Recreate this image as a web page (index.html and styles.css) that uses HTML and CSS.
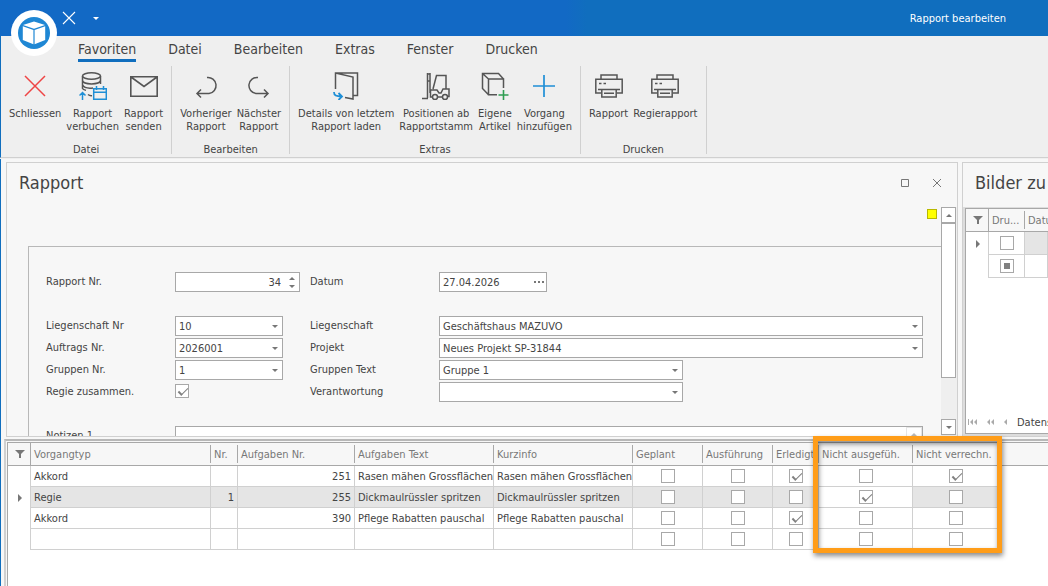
FILE: index.html
```html
<!DOCTYPE html>
<html lang="de">
<head>
<meta charset="utf-8">
<title>Rapport bearbeiten</title>
<link rel="stylesheet" href="styles.css">
</head>
<body>
<header class="titlebar">
  <div class="logo">
    <svg width="46" height="46" viewBox="0 0 46 46"><circle cx="23" cy="23" r="23" fill="#fff"/><circle cx="23" cy="23" r="16" fill="#1f87d4"/><path d="M23 11.5L34 15L23 18.7L12 15Z M11.8 16.3L22.4 20V34.2L11.8 30Z M34.2 16.3L23.6 20V34.2L34.2 30Z" fill="#fff"/></svg>
  </div>
  <button class="quick" aria-label="Schliessen"><svg width="14" height="14" viewBox="0 0 14 14"><path d="M1 1L13 13M13 1L1 13" stroke="#fff" stroke-width="1.1"/></svg></button>
  <button class="quick" aria-label="Mehr"><svg width="6" height="3" viewBox="0 0 6 3"><path d="M0 0H6L3 3Z" fill="#fff"/></svg></button>
  <h1 class="window-title">Rapport bearbeiten</h1>
</header>

<nav class="tabs">
  <button class="tab tab-active">Favoriten</button>
  <button class="tab">Datei</button>
  <button class="tab">Bearbeiten</button>
  <button class="tab">Extras</button>
  <button class="tab">Fenster</button>
  <button class="tab">Drucken</button>
</nav>

<div class="ribbon">
  <section class="group">
    <div class="tools">
      <button class="tool"><svg class="icon" viewBox="0 0 28 28"><path d="M4 4L24 24M24 4L4 24" stroke="#ef4444" stroke-width="1.5"/></svg><span>Schliessen</span></button>
      <button class="tool"><svg class="icon" viewBox="0 0 28 28"><g stroke="#555" stroke-width="1.5"><ellipse cx="12.5" cy="4" rx="9" ry="3.2"/><path d="M3.5 4V16.5C4 17.5 5.500 18 7 18.400M21.500 4V12M3.500 8.500C4.500 13 20.500 13 21.500 8.500M3.500 12.800C5 16 10 16.500 14 16M9 22.500C11 24 12 23.500 13 23.700"/></g><g stroke="#1f8fd6" stroke-width="1.5"><path d="M14.700 16.700H27.300V27.200H14.700ZM14.700 20.300H27.300M17.500 14V18M24.500 14V18M3.500 28V20.500M.5 23.500L3.500 20.500L6.500 23.500"/></g></svg><span>Rapport<br>verbuchen</span></button>
      <button class="tool"><svg class="icon" viewBox="0 0 28 28"><path d="M.8 4.800H27.200V24.200H.8ZM1 5L14 14.500L27 5" stroke="#555" stroke-width="1.600"/></svg><span>Rapport<br>senden</span></button>
    </div>
    <h2 class="group-name">Datei</h2>
  </section>
  <section class="group">
    <div class="tools">
      <button class="tool"><svg class="icon" viewBox="0 0 28 28"><path d="M15 5.500A8 8 0 0 1 17 21.500H5M9 17.500L5 21.500L9 25.500" stroke="#555" stroke-width="1.500"/></svg><span>Vorheriger<br>Rapport</span></button>
      <button class="tool"><svg class="icon" viewBox="0 0 28 28"><path d="M13 5.500A8 8 0 0 0 11 21.500H23M19 17.500L23 21.500L19 25.500" stroke="#555" stroke-width="1.500"/></svg><span>Nächster<br>Rapport</span></button>
    </div>
    <h2 class="group-name">Bearbeiten</h2>
  </section>
  <section class="group">
    <div class="tools">
      <button class="tool"><svg class="icon" viewBox="0 0 28 28"><path d="M3.500 17V1H25.500V23.500H21.500M3.500 1L21 5V27L13 25.500" stroke="#555" stroke-width="1.500"/><path d="M2 20C2 23.500 4 24.500 10 24.500M6.500 21L10 24.500L6.500 28" stroke="#1f8fd6" stroke-width="1.800"/></svg><span>Details von letztem<br>Rapport laden</span></button>
      <button class="tool"><svg class="icon" viewBox="0 0 28 28"><path d="M5.500 1V26M8 1V21M5.500 2H8M5.500 9H8M0 26.500H6M11 17L14.500 3.500H24V16M10 25H8.500V18H15L17 21H19L21 17H27V24.500H26M16 25H20M24 17V3.500" stroke="#555" stroke-width="1.500"/><circle cx="13" cy="25" r="2.500" stroke="#555" stroke-width="1.500"/><circle cx="23" cy="25" r="2.500" stroke="#555" stroke-width="1.500"/></svg><span>Positionen ab<br>Rapportstamm</span></button>
      <button class="tool"><svg class="icon" viewBox="0 0 28 28"><path d="M16 22.700H7.500V7H22.500V16M7.500 22.700L1.500 16.500V1.500H17.500L22.500 7M1.500 1.500L7.500 7" stroke="#555" stroke-width="1.500"/><path d="M17.500 23H27.500M22.500 18V28" stroke="#2e9d52" stroke-width="1.600"/></svg><span>Eigene<br>Artikel</span></button>
      <button class="tool"><svg class="icon" viewBox="0 0 28 28"><path d="M14 3V25M3 14H25" stroke="#1f8fd6" stroke-width="1.700"/></svg><span>Vorgang<br>hinzufügen</span></button>
    </div>
    <h2 class="group-name">Extras</h2>
  </section>
  <section class="group">
    <div class="tools">
      <button class="tool"><svg class="icon" viewBox="0 0 28 28"><path d="M6 7V3H22V7M6 21H.8V7.200H27.200V21H22M3 17.500H25M6.800 17.500V25H21.200V17.500M9 21.300H19M4 11.500H6.500M8.500 11.500H11" stroke="#555" stroke-width="1.500"/></svg><span>Rapport</span></button>
      <button class="tool"><svg class="icon" viewBox="0 0 28 28"><path d="M6 7V3H22V7M6 21H.8V7.200H27.200V21H22M3 17.500H25M6.800 17.500V25H21.200V17.500M9 21.300H19M4 11.500H6.500M8.500 11.500H11" stroke="#555" stroke-width="1.500"/></svg><span>Regierapport</span></button>
    </div>
    <h2 class="group-name">Drucken</h2>
  </section>
</div>

<main class="workspace">
  <section class="panel report">
    <div class="panel-head">
      <h2 class="panel-title">Rapport</h2>
      <button class="win" aria-label="Maximieren"><svg width="10" height="10" viewBox="0 0 10 10"><path d="M1.500 1.500H8.500V8.500H1.500Z" stroke="#777"/></svg></button>
      <button class="win" aria-label="Schliessen"><svg width="10" height="10" viewBox="0 0 10 10"><path d="M1 1L9 9M9 1L1 9" stroke="#777"/></svg></button>
    </div>
    <div class="scroll-area">
      <div class="form-view">
        <div class="note-row"><span class="marker"></span></div>
        <form class="form">
          <label for="rnr">Rapport Nr.</label>
          <div class="field field-number"><input id="rnr" class="box number" value="34"><span class="spin"><i class="arrow-up"></i><i class="arrow"></i></span></div>
          <label for="datum">Datum</label>
          <div class="field field-small"><input id="datum" class="box" value="27.04.2026"><button type="button" class="dots" aria-label="Datum wählen"><svg width="10" height="2" viewBox="0 0 10 2"><path d="M0 1H2M4 1H6M8 1H10" stroke="#777" stroke-width="2"/></svg></button></div>
          <span class="blank-row"></span>
          <label for="lnr">Liegenschaft Nr</label>
          <div class="field field-small"><select id="lnr" class="box"><option>10</option></select><i class="arrow drop"></i></div>
          <label for="lieg">Liegenschaft</label>
          <div class="field"><select id="lieg" class="box"><option>Geschäftshaus MAZUVO</option></select><i class="arrow drop"></i></div>
          <label for="anr">Auftrags Nr.</label>
          <div class="field field-small"><select id="anr" class="box"><option>2026001</option></select><i class="arrow drop"></i></div>
          <label for="proj">Projekt</label>
          <div class="field"><select id="proj" class="box"><option>Neues Projekt SP-31844</option></select><i class="arrow drop"></i></div>
          <label for="gnr">Gruppen Nr.</label>
          <div class="field field-small"><select id="gnr" class="box"><option>1</option></select><i class="arrow drop"></i></div>
          <label for="gtext">Gruppen Text</label>
          <div class="field field-medium"><select id="gtext" class="box"><option>Gruppe 1</option></select><i class="arrow drop"></i></div>
          <label for="regie">Regie zusammen.</label>
          <div class="field field-check"><input id="regie" type="checkbox" class="check" checked></div>
          <label for="verant">Verantwortung</label>
          <div class="field field-medium"><select id="verant" class="box"><option></option></select><i class="arrow drop"></i></div>
          <span class="blank-row"></span>
          <label for="notiz">Notizen 1</label>
          <div class="field field-notes"><textarea id="notiz" class="box"></textarea><span class="notes-scroll"><i class="arrow-up"></i></span></div>
        </form>
      </div>
      <div class="scrollbar">
        <button class="bar-button" aria-label="Nach oben"><i class="arrow-up"></i></button>
        <div class="thumb"></div>
        <button class="bar-button bar-end" aria-label="Nach unten"><i class="arrow"></i></button>
      </div>
    </div>
  </section>

  <section class="panel pictures">
    <div class="panel-head"><h2 class="panel-title">Bilder zu</h2></div>
    <div class="picture-grid">
      <table class="grid picture-table">
        <colgroup><col class="w-mark"><col class="w-print"><col class="w-date"></colgroup>
        <thead><tr><th class="corner"><svg width="10" height="10" viewBox="0 0 10 10"><path d="M0 1H10L6 5V9H4V5Z" fill="#777"/></svg></th><th>Dru...</th><th>Datum</th></tr></thead>
        <tbody>
          <tr><th><i class="row-arrow"></i></th><td class="c"><input type="checkbox" class="check" aria-label="Drucken 1"></td><td class="shade"></td></tr>
          <tr><th></th><td class="c"><input type="checkbox" class="check check-mixed" aria-label="Drucken 2"></td><td></td></tr>
        </tbody>
      </table>
      <div class="pager">
        <button aria-label="Erster"><svg width="10" height="6" viewBox="0 0 10 6"><path d="M.5 0V6" stroke="#aaa"/><path d="M5 0V6L2 3ZM9 0V6L6 3Z" fill="#aaa"/></svg></button>
        <button aria-label="Vorherige Seite"><svg width="8" height="6" viewBox="0 0 8 6"><path d="M3 0V6L0 3ZM7 0V6L4 3Z" fill="#aaa"/></svg></button>
        <button aria-label="Vorheriger"><svg width="4" height="6" viewBox="0 0 4 6"><path d="M3 0V6L0 3Z" fill="#aaa"/></svg></button>
        <span>Datensatz</span>
      </div>
    </div>
  </section>

  <section class="tasks">
    <div class="task-grid">
      <table class="grid task-table">
        <colgroup><col class="w-corner"><col class="w-type"><col class="w-nr"><col class="w-task"><col class="w-text"><col class="w-text"><col class="w-flag"><col class="w-flag"><col class="w-done"><col class="w-notdone"><col class="w-unbilled"><col></colgroup>
        <thead><tr><th class="corner"><svg width="10" height="10" viewBox="0 0 10 10"><path d="M0 1H10L6 5V9H4V5Z" fill="#777"/></svg></th><th>Vorgangtyp</th><th>Nr.</th><th>Aufgaben Nr.</th><th>Aufgaben Text</th><th>Kurzinfo</th><th>Geplant</th><th>Ausführung</th><th>Erledigt</th><th>Nicht ausgefüh.</th><th>Nicht verrechn.</th><th></th></tr></thead>
        <tbody>
          <tr><th></th><td>Akkord</td><td></td><td class="r">251</td><td>Rasen mähen Grossflächen</td><td>Rasen mähen Grossflächen</td><td class="c"><input type="checkbox" class="check" aria-label="Geplant"></td><td class="c"><input type="checkbox" class="check" aria-label="Ausführung"></td><td class="c"><input type="checkbox" class="check" aria-label="Erledigt" checked></td><td class="c"><input type="checkbox" class="check" aria-label="Nicht ausgeführt"></td><td class="c"><input type="checkbox" class="check" aria-label="Nicht verrechnet" checked></td><td class="rest"></td></tr>
          <tr class="current"><th><i class="row-arrow"></i></th><td>Regie</td><td class="r">1</td><td class="r">255</td><td>Dickmaulrüssler spritzen</td><td>Dickmaulrüssler spritzen</td><td class="c"><input type="checkbox" class="check" aria-label="Geplant"></td><td class="c"><input type="checkbox" class="check" aria-label="Ausführung"></td><td class="c"><input type="checkbox" class="check" aria-label="Erledigt"></td><td class="c focus"><input type="checkbox" class="check" aria-label="Nicht ausgeführt" checked></td><td class="c"><input type="checkbox" class="check" aria-label="Nicht verrechnet"></td><td class="rest"></td></tr>
          <tr><th></th><td>Akkord</td><td></td><td class="r">390</td><td>Pflege Rabatten pauschal</td><td>Pflege Rabatten pauschal</td><td class="c"><input type="checkbox" class="check" aria-label="Geplant"></td><td class="c"><input type="checkbox" class="check" aria-label="Ausführung"></td><td class="c"><input type="checkbox" class="check" aria-label="Erledigt" checked></td><td class="c"><input type="checkbox" class="check" aria-label="Nicht ausgeführt"></td><td class="c"><input type="checkbox" class="check" aria-label="Nicht verrechnet"></td><td class="rest"></td></tr>
          <tr><th></th><td></td><td></td><td></td><td></td><td></td><td class="c"><input type="checkbox" class="check" aria-label="Geplant"></td><td class="c"><input type="checkbox" class="check" aria-label="Ausführung"></td><td class="c"><input type="checkbox" class="check" aria-label="Erledigt"></td><td class="c"><input type="checkbox" class="check" aria-label="Nicht ausgeführt"></td><td class="c"><input type="checkbox" class="check" aria-label="Nicht verrechnet"></td><td class="rest"></td></tr>
        </tbody>
      </table>
    </div>
    <div class="highlight"></div>
  </section>
</main>
</body>
</html>
```
FILE: styles.css
```css
:root {
  --blue: #106ebe;
  --line: #a8a8a8;
  --soft: #d0d0d0;
  --text: #444;
}
* { box-sizing: border-box; }
body {
  margin: 0;
  height: 100vh;
  display: flex;
  flex-direction: column;
  overflow: hidden;
  background: #efefef;
  color: var(--text);
  font: 11px/13px Tahoma, "DejaVu Sans Condensed", "Noto Sans", sans-serif;
}
h1, h2 { margin: 0; font: inherit; }
button, input, select, textarea { font: inherit; color: inherit; }
button { background: none; border: 0; padding: 0; }
svg { display: block; fill: none; }

/* Title bar */
.titlebar {
  position: relative;
  display: flex;
  align-items: center;
  gap: 17px;
  flex: none;
  height: 36px;
  padding: 0 42px 0 62px;
  background: linear-gradient(90deg, #1269c5 0 54%, var(--blue) 56%);
  color: #fff;
}
.logo { position: absolute; left: 11px; top: 10px; z-index: 1; }
.window-title { margin-left: auto; }

/* Ribbon */
.tabs {
  display: flex;
  gap: 32px;
  flex: none;
  height: 30px;
  padding: 4px 0 4px 77px;
  border-left: 1px solid var(--blue);
  font-size: 14px;
}
.tab { border-bottom: 3px solid transparent; line-height: 19px; }
.tab-active { border-color: var(--blue); }
.ribbon {
  display: flex;
  flex: none;
  height: 92px;
  border-left: 1px solid var(--blue);
  border-bottom: 1px solid var(--soft);
}
.group {
  display: flex;
  flex-direction: column;
  justify-content: space-between;
  height: 88px;
  padding: 6px 8px 0;
  border-right: 1px solid var(--soft);
}
.tools { display: flex; gap: 5px; }
.tool { display: flex; flex-direction: column; align-items: center; gap: 7px; white-space: nowrap; }
.icon { width: 28px; height: 28px; }
.group-name { text-align: center; line-height: 9px; }

/* Workspace */
.workspace {
  display: grid;
  grid-template: 278px minmax(0, 1fr) / minmax(0, 1fr) 86px;
  column-gap: 4px;
  flex: 1;
  min-height: 0;
  margin-top: 1px;
  padding-left: 2px;
  border-left: 1px solid var(--blue);
  background: #f7f7f7;
}
.panel {
  display: flex;
  flex-direction: column;
  min-width: 0;
  min-height: 0;
  margin-top: 3px;
  overflow: hidden;
  border: 1px solid var(--soft);
}
.report { margin-left: 3px; }
.pictures { border-right: 0; }
.panel-head {
  display: flex;
  align-items: center;
  gap: 22px;
  flex: none;
  height: 44px;
  padding: 0 15px 4px 12px;
}
.panel-title { flex: 1; font-size: 18px; line-height: 24px; white-space: nowrap; }
.scroll-area { display: flex; flex: 1; min-height: 0; }
.form-view { flex: 1; overflow: hidden; }
.note-row { display: flex; justify-content: flex-end; height: 39px; padding: 2px 4px 0; }
.marker { width: 10px; height: 10px; background: #ff0; border: 1px solid #b8b800; }
.form {
  display: grid;
  grid-template-columns: 129px 135px 129px minmax(0, 1fr);
  grid-auto-rows: 20px;
  row-gap: 2px;
  min-height: 240px;
  margin-left: 21px;
  padding: 25px 18px 0 17px;
  border: 1px solid #b8b8b8;
  border-right: 0;
}
.form label { line-height: 19px; }
.blank-row { grid-column: 1 / -1; }
.field { position: relative; height: 20px; }
.field-number { width: 125px; }
.field-small { width: 108px; }
.field-medium { width: 244px; }
.field-check { padding-top: 2px; }
.box {
  display: block;
  width: 100%;
  height: 20px;
  margin: 0;
  padding: 0 3px;
  appearance: none;
  resize: none;
  background: #fff;
  border: 1px solid var(--line);
  border-radius: 0;
}
.number { padding-right: 18px; text-align: right; }
.field-notes { grid-column: 2 / -1; }
.field-notes .box { height: 60px; }
.notes-scroll { position: absolute; right: 1px; top: 1px; padding: 5px 4px; width: 16px; height: 18px; border: 1px solid #ccc; opacity: .5; }
.arrow, .arrow-up { display: block; width: 0; height: 0; border: 3px solid transparent; }
.arrow { border-top-color: #777; border-bottom: 0; }
.arrow-up { border-bottom-color: #777; border-top: 0; }
.drop { position: absolute; right: 5px; top: 9px; }
.spin { position: absolute; right: 5px; top: 5px; display: grid; gap: 5px; }
.dots { position: absolute; right: 3px; top: 9px; }

.scrollbar { display: flex; flex-direction: column; width: 16px; padding: 0 1px 1px 0; background: #efefef; }
.bar-button { display: grid; place-items: center; height: 16px; background: #fff; border: 1px solid var(--line); }
.thumb { height: 155px; background: #fff; border: 1px solid var(--line); }
.bar-end { margin-top: auto; }

/* Check boxes */
.check {
  display: block;
  width: 14px;
  height: 14px;
  margin: 0;
  appearance: none;
  background: #fff;
  border: 1px solid var(--line);
}
.check:checked::after {
  content: "";
  display: block;
  width: 8px;
  height: 4px;
  margin: 3px 2px;
  border: solid #808080;
  border-width: 0 0 1px 2px;
  transform: rotate(-45deg);
}
.check-mixed { padding: 3px; background: #808080 content-box; }

/* Data grids */
.grid { width: 100%; border-collapse: separate; border-spacing: 0; table-layout: fixed; }
.grid th, .grid td { padding: 0 2px 0 3px; overflow: hidden; white-space: nowrap; text-align: left; font-weight: normal; }
.grid thead th {
  height: 23px;
  color: #777;
  background: linear-gradient(var(--line), var(--line)) right 50% / 1px 18px no-repeat #f7f7f7;
  border-bottom: 1px solid var(--line);
}
.grid thead th:last-child { background: #f7f7f7; }
.grid thead .corner { background: #f7f7f7; border-right: 1px solid var(--line); }
.corner svg, .row-arrow { margin: 0 auto; }
.grid tbody th { border-right: 1px solid var(--soft); }
.grid td { height: 21px; border-right: 1px solid var(--soft); border-bottom: 1px solid var(--soft); }
.grid .rest { border: 0; }
.grid .r { text-align: right; padding-right: 3px; }
.c .check { margin: 0 auto; }
.row-arrow { display: block; width: 4px; border: 4px solid transparent; border-left-color: #777; border-right: 0; }
.current td { background: #e5e5e5; }
.current .focus, .current .rest { background: #fff; }
.shade { background: #e5e5e5; }

.picture-grid {
  display: flex;
  flex-direction: column;
  flex: 1;
  min-height: 0;
  overflow: hidden;
  border: 2px solid #ddd;
  border-top-width: 1px;
  border-right: 0;
  background: #fff;
  box-shadow: inset 1px 1px var(--line), inset 0 -1px var(--line);
  padding: 1px 0 2px 1px;
}
.picture-table { width: 100%; }
.picture-table td { height: 23px; }
.picture-table thead th { height: 23px; }
.w-mark { width: 23px; }
.w-print { width: 36px; }
.pager { display: flex; align-items: center; gap: 9px; height: 20px; margin-top: auto; padding-left: 2px; }

.tasks {
  position: relative;
  grid-column: 1 / -1;
  min-height: 0;
  margin-top: 2px;
  margin-left: 1px;
  border: 2px solid var(--soft);
  border-top-color: #b8b8b8;
  border-right: 0;
  border-bottom: 0;
  padding: 1px 0 0 1px;
}
.task-grid { height: 100%; border: solid var(--line); border-width: 1px 0 0 1px; background: #fff; }
.w-corner { width: 23px; }
.w-type { width: 180px; }
.w-nr { width: 27px; }
.w-task { width: 117px; }
.w-text { width: 139px; }
.w-flag { width: 70px; }
.w-done { width: 46px; }
.w-notdone { width: 94px; }
.w-unbilled { width: 85px; }

/* Callout frame around the two "Nicht" columns */
.highlight {
  position: absolute;
  left: 807px;
  top: -5px;
  width: 189px;
  height: 117px;
  border: 5px solid #ff9d19;
  box-shadow: 1px 3px 5px rgba(0, 0, 0, .45), inset 1px 3px 5px rgba(0, 0, 0, .45);
  pointer-events: none;
}
```
